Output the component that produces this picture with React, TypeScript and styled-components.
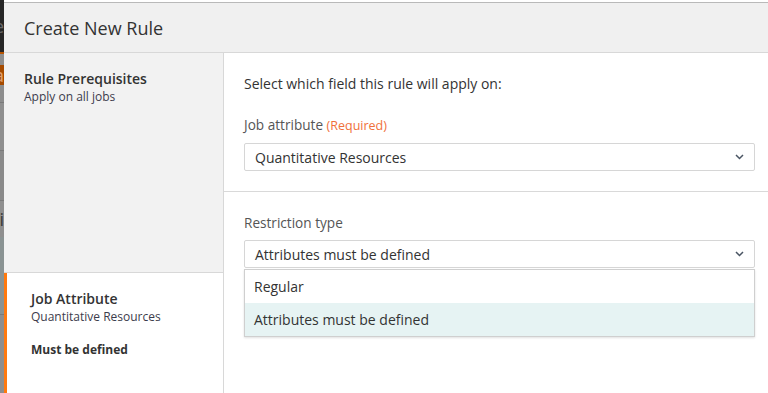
import React from 'react'
import styled, { createGlobalStyle } from 'styled-components'

const GlobalStyle = createGlobalStyle`
  html, body {
    margin: 0;
    padding: 0;
    background: #fff;
  }
  body {
    font-family: "Open Sans", "Liberation Sans", sans-serif;
    color: #333;
  }
`

const backdrop = [
  { h: 52, bg: '#262626', text: 'e', color: '#6a6a6a' },
  { h: 2, bg: '#b85400' },
  { h: 11, bg: '#8e8e8e' },
  { h: 20, bg: '#a64b00', text: 'la', color: '#e0a070' },
  { h: 17, bg: '#8d8d8d' },
  { h: 48, bg: '#8f8f8f', line: true },
  { h: 50, bg: '#8a8a8a', line: true },
  { h: 37, bg: '#8f8f8f', line: true, text: 'i', color: '#3a3a3a' },
  { h: 77, bg: '#8a9393' },
  { h: 80, bg: '#8e8e8e', line: true },
]

const App: React.FC = () => {
  return (
    <>
      <GlobalStyle />
      <Page>
        <Strip>
          {backdrop.map((s, i) => (
            <StripPart key={i} $h={s.h} $bg={s.bg} $line={!!s.line} $color={s.color}>
              {s.text}
            </StripPart>
          ))}
        </Strip>
        <Modal>
          <Header>Create New Rule</Header>
          <Body>
            <Sidebar>
              <Step $active={false} $h={219}>
                <StepTitle>Rule Prerequisites</StepTitle>
                <StepSub>Apply on all jobs</StepSub>
              </Step>
              <Step $active={true}>
                <StepTitle>Job Attribute</StepTitle>
                <StepSub>Quantitative Resources</StepSub>
                <StepNote>Must be defined</StepNote>
              </Step>
            </Sidebar>
            <Content>
              <Section>
                <Intro>Select which field this rule will apply on:</Intro>
                <Label>
                  Job attribute <Required>(Required)</Required>
                </Label>
                <Select>
                  Quantitative Resources
                  <Chevron />
                </Select>
              </Section>
              <Section $last>
                <Label>Restriction type</Label>
                <SelectWrap>
                  <Select>
                    Attributes must be defined
                    <Chevron />
                  </Select>
                  <Menu>
                    <Option $selected={false}>Regular</Option>
                    <Option $selected={true}>Attributes must be defined</Option>
                  </Menu>
                </SelectWrap>
              </Section>
            </Content>
          </Body>
        </Modal>
      </Page>
    </>
  )
}

const Chevron: React.FC = () => (
  <ChevronIcon width="9" height="6" viewBox="0 0 9 6">
    <polyline points="1,1 4.5,4.5 8,1" fill="none" stroke="#4a5563" strokeWidth="1.5" />
  </ChevronIcon>
)

const Page = styled.div`
  display: flex;
  height: 393px;
  overflow: hidden;
`

const Strip = styled.div`
  width: 4px;
  flex-shrink: 0;
  display: flex;
  flex-direction: column;
`

const StripPart = styled.div<{ $h: number; $bg: string; $line: boolean; $color?: string }>`
  height: ${p => p.$h}px;
  flex-shrink: 0;
  background: ${p => p.$bg};
  border-top: ${p => (p.$line ? '1px solid #7a7a7a' : 'none')};
  box-sizing: border-box;
  overflow: hidden;
  display: flex;
  justify-content: flex-end;
  align-items: center;
  font-size: 18px;
  line-height: 1;
  color: ${p => p.$color || 'transparent'};
  white-space: nowrap;
`

const Modal = styled.div`
  flex: 1;
  margin-top: 2px;
  border-top: 1px solid #b9b9b9;
  display: flex;
  flex-direction: column;
  min-width: 0;
`

const Header = styled.div`
  height: 49px;
  flex-shrink: 0;
  background: #f0f0f0;
  border-bottom: 1px solid #d8d8d8;
  display: flex;
  align-items: center;
  padding-left: 20px;
  font-size: 18px;
  color: #333;
`

const Body = styled.div`
  flex: 1;
  display: flex;
`

const Sidebar = styled.div`
  width: 219px;
  flex-shrink: 0;
  border-right: 1px solid #d8d8d8;
  display: flex;
  flex-direction: column;
  background: #fff;
`

const Step = styled.div<{ $active: boolean; $h?: number }>`
  box-sizing: border-box;
  ${p => (p.$h ? `height: ${p.$h + 1}px;` : 'flex: 1;')}
  background: ${p => (p.$active ? '#fff' : '#f2f2f2')};
  border-bottom: ${p => (p.$active ? 'none' : '1px solid #d8d8d8')};
  border-left: ${p => (p.$active ? '3px solid #ff7a0f' : 'none')};
  padding: ${p => (p.$active ? '16px 0 0 24px' : '16px 0 0 20px')};
`

const StepTitle = styled.div`
  font-size: 14px;
  font-weight: 600;
  color: #333;
  line-height: 19px;
`

const StepSub = styled.div`
  font-size: 12px;
  color: #3c3c4c;
  line-height: 17px;
`

const StepNote = styled.div`
  margin-top: 16px;
  font-size: 12px;
  font-weight: 700;
  color: #333;
`

const Content = styled.div`
  flex: 1;
  display: flex;
  flex-direction: column;
  min-width: 0;
`

const Section = styled.div<{ $last?: boolean }>`
  padding: ${p => (p.$last ? '21px' : '20px')} 13px 20px 20px;
  border-bottom: ${p => (p.$last ? 'none' : '1px solid #d9d9d9')};
`

const Intro = styled.div`
  font-size: 14px;
  line-height: 22px;
  color: #333;
  margin-bottom: 20px;
`

const Label = styled.div`
  font-size: 13.6px;
  line-height: 20px;
  color: #555;
  margin-bottom: 7px;
`

const Required = styled.span`
  font-size: 12.5px;
  color: #f0703a;
`

const SelectWrap = styled.div`
  position: relative;
`

const Select = styled.div`
  box-sizing: border-box;
  height: 28px;
  border: 1px solid #d6d6d6;
  border-radius: 2px;
  display: flex;
  align-items: center;
  justify-content: space-between;
  padding: 0 10px 0 10px;
  font-size: 14px;
  color: #333;
  background: #fff;
`

const ChevronIcon = styled.svg`
  display: block;
`

const Menu = styled.div`
  position: absolute;
  left: 0;
  right: 0;
  top: 29px;
  background: #fff;
  border: 1px solid #cfcfcf;
  box-shadow: 0 1px 2px rgba(0, 0, 0, 0.12);
  z-index: 2;
`

const Option = styled.div<{ $selected: boolean }>`
  height: 33px;
  display: flex;
  align-items: center;
  padding-left: 9px;
  font-size: 14px;
  color: #333;
  background: ${p => (p.$selected ? '#e6f3f3' : '#fff')};
`

export default App
